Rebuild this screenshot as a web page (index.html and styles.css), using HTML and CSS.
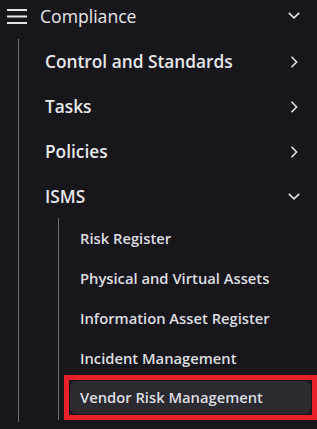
FILE: index.html
```html
<!DOCTYPE html>
<html lang="en">
<head>
    <meta charset="UTF-8">
    <meta name="viewport" content="width=device-width, initial-scale=1.0">
    <title>Compliance Menu</title>
    <link rel="stylesheet" href="styles.css">
</head>
<body>
    <nav class="sidebar">
        <div class="menu-header">
            <svg class="burger" width="20" height="16" viewBox="0 0 20 16">
                <path d="M0 2h20M0 8.5h20M0 15h20" stroke="#e4e4e6" stroke-width="2" fill="none"/>
            </svg>
            <span class="menu-title">Compliance</span>
            <svg class="chev-down" width="12" height="7" viewBox="0 0 12 7">
                <polyline points="0.8,0.8 6,5.8 11.2,0.8" stroke="#e4e4e6" stroke-width="1.6" fill="none"/>
            </svg>
        </div>

        <ul class="tree">
            <li class="tree-item">
                <span>Control and Standards</span>
                <svg class="chev-right" width="12" height="12" viewBox="0 0 12 12">
                    <polyline points="3.5,0.8 8.6,6 3.5,11.2" stroke="#e4e4e6" stroke-width="1.6" fill="none"/>
                </svg>
            </li>
            <li class="tree-item">
                <span>Tasks</span>
                <svg class="chev-right" width="12" height="12" viewBox="0 0 12 12">
                    <polyline points="3.5,0.8 8.6,6 3.5,11.2" stroke="#e4e4e6" stroke-width="1.6" fill="none"/>
                </svg>
            </li>
            <li class="tree-item">
                <span>Policies</span>
                <svg class="chev-right" width="12" height="12" viewBox="0 0 12 12">
                    <polyline points="3.5,0.8 8.6,6 3.5,11.2" stroke="#e4e4e6" stroke-width="1.6" fill="none"/>
                </svg>
            </li>
            <li class="tree-item">
                <span>ISMS</span>
                <svg class="chev-down" width="12" height="7" viewBox="0 0 12 7">
                    <polyline points="0.8,0.8 6,5.8 11.2,0.8" stroke="#e4e4e6" stroke-width="1.6" fill="none"/>
                </svg>
            </li>
            <li>
                <ul class="subtree">
                    <li class="sub-item"><a href="#">Risk Register</a></li>
                    <li class="sub-item"><a href="#">Physical and Virtual Assets</a></li>
                    <li class="sub-item"><a href="#">Information Asset Register</a></li>
                    <li class="sub-item"><a href="#">Incident Management</a></li>
                    <li class="sub-item marked">
                        <div class="marker">
                            <a href="#" class="active">Vendor Risk Management</a>
                        </div>
                    </li>
                </ul>
            </li>
        </ul>
    </nav>
</body>
</html>
```

FILE: styles.css
```css
body {
    margin: 0;
    padding: 0;
    background-color: #17161b; /* near black sidebar */
    font-family: "Open Sans", "Noto Sans", sans-serif;
    overflow: hidden;
}

ul {
    list-style: none;
    margin: 0;
    padding: 0;
}

.menu-header {
    display: flex;
    align-items: center;
    height: 31px;
    padding: 0 17px 0 7px;
    color: #e8e8ea;
}

.burger {
    margin-right: 13px;
}

.menu-title {
    flex: 1;
    font-size: 17.6px;
}

.tree {
    margin: 8px 0 0 18px;
    padding-bottom: 7px;
    border-left: 1px solid #6e6e72;
}

.tree-item {
    display: flex;
    align-items: center;
    justify-content: space-between;
    height: 45px;
    padding: 0 17px 0 26px;
    font-size: 17.3px;
    font-weight: 600;
    color: #e8e8ea;
}

.subtree {
    margin-left: 39px;
    margin-top: -1px;
    border-left: 1px solid #6e6e72;
}

.sub-item {
    padding: 3px 4px 3px 11px;
}

.sub-item a {
    display: block;
    height: 34px;
    line-height: 34px;
    padding-left: 10px;
    border-radius: 6px;
    font-size: 14.75px;
    font-weight: 600;
    color: #dedee0;
    text-decoration: none;
}

/* red box drawn round the selected row */
.sub-item.marked {
    padding: 0 0 0 5px;
    margin: -3px 0 -5px 0;
}

.marker {
    border: 5px solid #e8202a;
    padding: 1px;
}

.sub-item a.active {
    height: 33px;
    line-height: 33px;
    background-color: #2b2a30; /* highlighted row */
}
```
